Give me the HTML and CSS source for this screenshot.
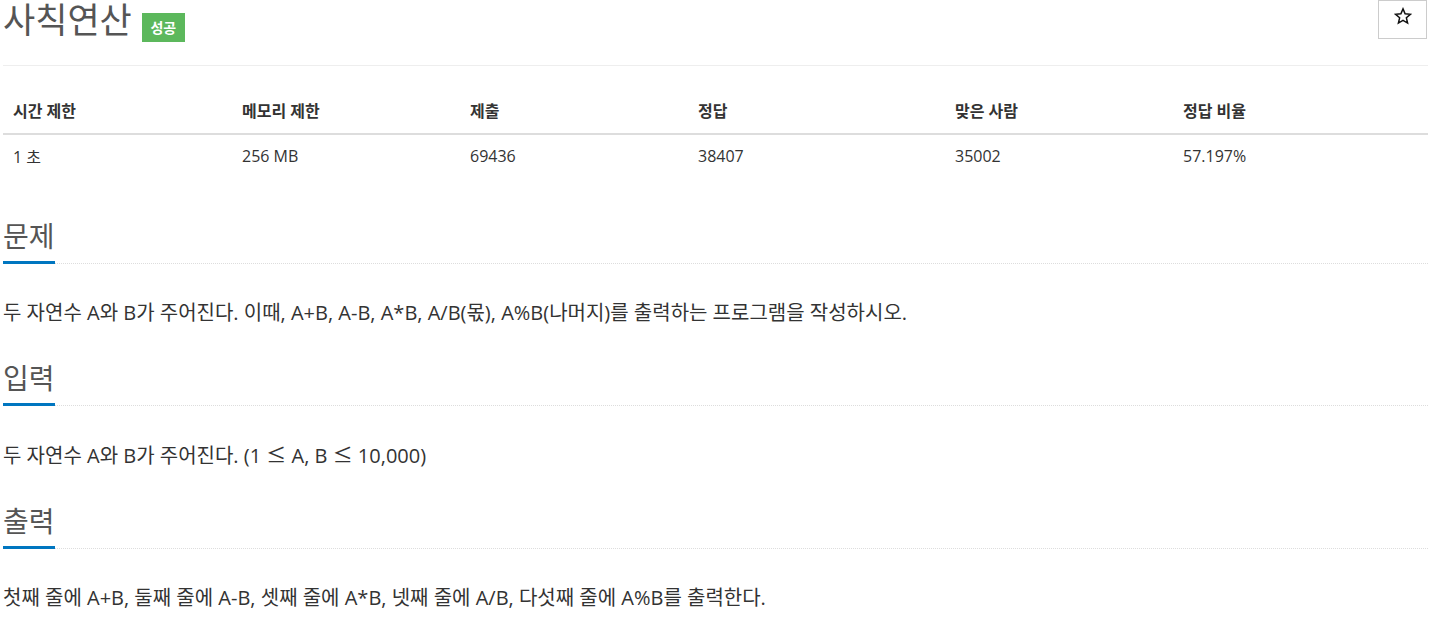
FILE: index.html
```html
<!DOCTYPE html>
<html lang="ko">
<head>
<meta charset="utf-8">
<link rel="stylesheet" href="styles.css">
</head>
<body>
<div class="page">
  <div class="title-row">
    <h1 class="title"><span class="title-text">사칙연산</span><span class="badge">성공</span></h1>
    <button class="star" type="button" aria-label="즐겨찾기">
      <svg width="18" height="18" viewBox="0 0 24 24"><path d="M12 2.5l2.8 6.6 7.1.6-5.4 4.7 1.6 7-6.1-3.7-6.1 3.7 1.6-7L2.1 9.7l7.1-.6z" fill="none" stroke="#111" stroke-width="2" stroke-linejoin="miter"/></svg>
    </button>
  </div>
  <hr class="rule">
  <table class="info">
    <thead>
      <tr><th class="c1">시간 제한</th><th class="c2">메모리 제한</th><th class="c3">제출</th><th class="c4">정답</th><th class="c5">맞은 사람</th><th class="c6">정답 비율</th></tr>
    </thead>
    <tbody>
      <tr><td>1 초</td><td>256 MB</td><td>69436</td><td>38407</td><td>35002</td><td>57.197%</td></tr>
    </tbody>
  </table>
  <section class="sec">
    <div class="headline"><h2>문제</h2></div>
    <p>두 자연수 A와 B가 주어진다. 이때, A+B, A-B, A*B, A/B(몫), A%B(나머지)를 출력하는 프로그램을 작성하시오.</p>
  </section>
  <section class="sec">
    <div class="headline"><h2>입력</h2></div>
    <p>두 자연수 A와 B가 주어진다. (1 <span class="op">≤</span> A, B <span class="op">≤</span> 10,000)</p>
  </section>
  <section class="sec">
    <div class="headline"><h2>출력</h2></div>
    <p>첫째 줄에 A+B, 둘째 줄에 A-B, 셋째 줄에 A*B, 넷째 줄에 A/B, 다섯째 줄에 A%B를 출력한다.</p>
  </section>
</div>
</body>
</html>
```
FILE: styles.css
```css
* { box-sizing: border-box; }
html, body { margin: 0; padding: 0; background: #fff; }
body {
  font-family: "Open Sans", "Noto Sans CJK KR", sans-serif;
  color: #333;
  font-size: 16px;
}
.page { width: 1425px; margin-left: 3px; }
.title-row { display: flex; justify-content: space-between; align-items: flex-start; height: 56px; }
.title { margin: 0; display: flex; align-items: flex-start; font-weight: 400; color: #555; }
.title-text { font-size: 35px; line-height: 40px; }
.badge {
  margin-left: 10px; margin-top: 13px;
  background: #5cb85c; color: #fff; font-size: 14px; font-weight: 700;
  line-height: 29px; height: 29px; width: 43px; text-align: center;
}
.star {
  width: 49px; height: 39px; border: 1px solid #ccc; background: #fff;
  display: flex; align-items: center; justify-content: center; padding: 0 0 7px 0; margin: 0 1px 0 0;
}
.rule { border: 0; border-top: 1px solid #eee; margin: 9px 0 20px; }
.info { width: 1425px; border-collapse: collapse; table-layout: fixed; }
.info th, .info td { text-align: left; padding: 0 10px; }
.info th { font-weight: 700; color: #333; height: 48px; border-bottom: 2px solid #ddd; vertical-align: middle; }
.info td { height: 42px; vertical-align: middle; }
.c1 { width: 229px; } .c2 { width: 228px; } .c3 { width: 228px; }
.c4 { width: 257px; } .c5 { width: 228px; } .c6 { width: 255px; }
.sec:first-of-type { margin-top: 43px; }
.headline { border-bottom: 1px dotted #ddd; }
.headline h2 {
  margin: 0 0 -1px; display: inline-block; font-size: 28px; font-weight: 400; color: #555;
  line-height: 34px; padding-bottom: 8px; border-bottom: 3px solid #0076c0;
}
.sec p { margin: 0; font-size: 20px; line-height: 28px; padding: 35px 0 34px; }
.op { font-family: "Noto Sans CJK KR", sans-serif; }
```
